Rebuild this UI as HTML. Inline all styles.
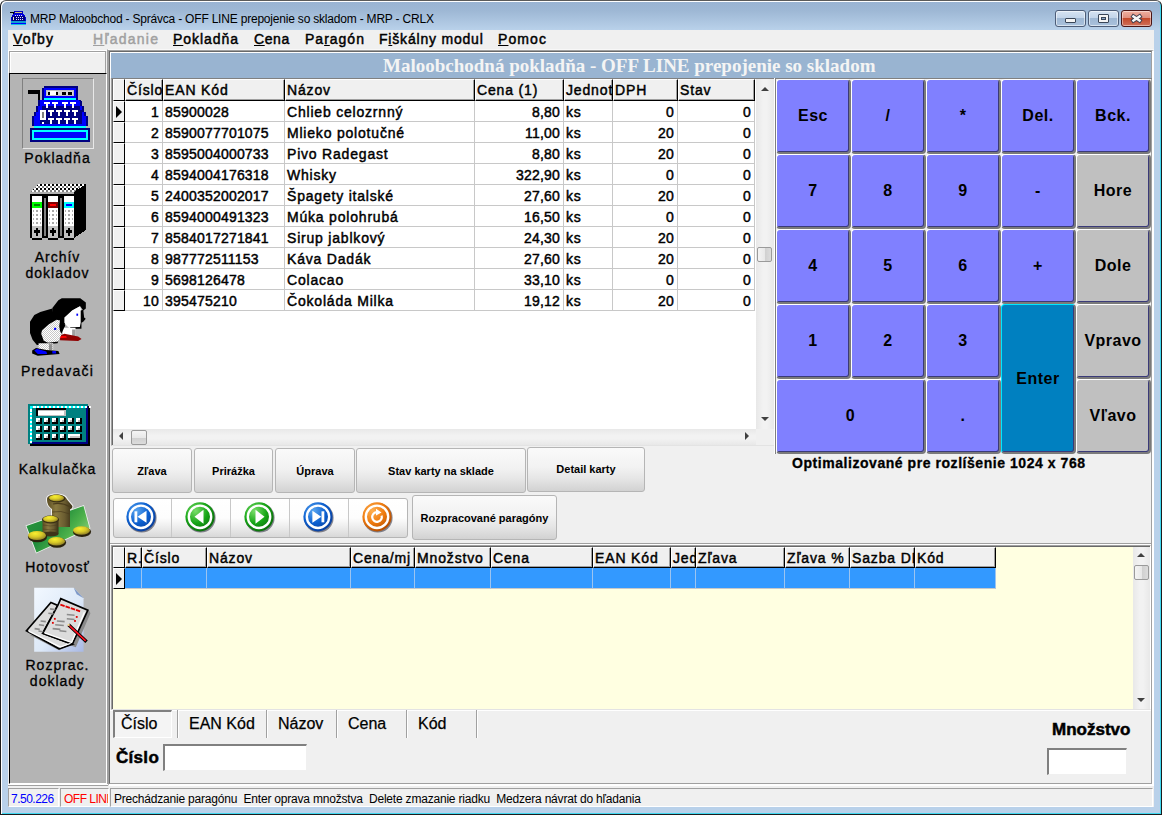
<!DOCTYPE html>
<html><head><meta charset="utf-8">
<style>
*{box-sizing:border-box;margin:0;padding:0}
html,body{width:1162px;height:815px;overflow:hidden;background:#fff}
body{position:relative;font-family:"Liberation Sans",sans-serif;color:#000}
.a{position:absolute}
.t{position:absolute;white-space:nowrap;line-height:1}
/* frame */
#frame{left:0;top:0;width:1162px;height:815px;background:linear-gradient(#99b3d2,#9eb8d5 10px,#b9d1ea 29px,#b9d1ea);border:1px solid #1c1c1c;border-top-color:#5a5a5a;border-radius:6px 6px 0 0;box-shadow:inset 1px 1px 0 #fff, inset -1px -1px 0 #40d8f0}
#client{left:8px;top:30px;width:1146px;height:777px;background:#f0f0f0}
.menu{font-weight:normal;-webkit-text-stroke:.45px currentColor;font-size:14px;top:32px}
.menu u{text-decoration:underline;text-underline-offset:1px;text-decoration-thickness:1px}
/* grid */
.g1h{position:absolute;top:79px;height:22px;background:#f0f0f0;border-left:1px solid #fff;border-top:1px solid #fff;border-right:1px solid #000;border-bottom:1px solid #000;box-shadow:inset -1px -1px 0 #a0a0a0;font-weight:normal;-webkit-text-stroke:.45px currentColor;letter-spacing:.85px;font-size:14px;padding:2px 0 0 1px;overflow:hidden;white-space:nowrap}
.g1c.tx{letter-spacing:.8px}
.g1c{position:absolute;height:21px;border-right:1px solid #c8c8c8;border-bottom:1px solid #c8c8c8;font-weight:normal;-webkit-text-stroke:.45px currentColor;letter-spacing:.2px;font-size:14px;padding:3px 2px 0 2px;overflow:hidden;white-space:nowrap}
.r{text-align:right;padding-right:3px}
.ind{position:absolute;left:113px;width:12px;height:21px;background:#f0f0f0;border-right:1px solid #000;border-bottom:1px solid #000;border-top:1px solid #fff;border-left:1px solid #fff}
.key{position:absolute;width:75px;height:75px;border-top:1px solid #fff;border-left:1px solid #fff;border-right:2px solid #7a7a7a;border-bottom:2px solid #7a7a7a;box-shadow:inset -1px -1px 0 #3a3a78;background:#8080ff;border-radius:4px;font-weight:bold;font-size:16px;letter-spacing:.5px;display:flex;align-items:center;justify-content:center}
.gray{background:#c0c0c0}
.enter{background:#0080c0;border-top-color:#00e8ff;border-left-color:#00e8ff}
.btn{position:absolute;border:1px solid #b5b5b5;border-radius:3px;background:linear-gradient(#fafafa 0%,#f2f2f2 45%,#e6e6e6 70%,#d2d2d2 100%);font-weight:bold;font-size:11px;display:flex;align-items:center;justify-content:center;color:#000}
.g2h{position:absolute;top:547px;height:21px;background:#f0f0f0;border-left:1px solid #fff;border-top:1px solid #fff;border-right:1px solid #000;border-bottom:1px solid #000;box-shadow:inset -1px -1px 0 #a0a0a0;font-weight:normal;-webkit-text-stroke:.45px currentColor;letter-spacing:.85px;font-size:14px;padding:2px 0 0 1px;overflow:hidden;white-space:nowrap}
.g2c{position:absolute;top:568px;height:21px;background:#3399ff;border-right:1px solid #9cc4f0;border-bottom:1px solid #c8c8c8}
.tab{position:absolute;top:710px;height:28px;font-size:16px;padding-top:6px;-webkit-text-stroke:.25px #000}
.tsep{position:absolute;top:710px;width:2px;height:28px;border-left:1px solid #a0a0a0;border-right:1px solid #fff}
.stat{position:absolute;top:788px;height:19px;border-top:1px solid #a0a0a0;border-left:1px solid #a0a0a0;border-right:1px solid #fff;border-bottom:1px solid #fff;font-size:12px;padding:3px 0 0 3px;white-space:nowrap;overflow:hidden}
.side{font-weight:normal;-webkit-text-stroke:.3px currentColor;font-size:14px;letter-spacing:1px;text-align:center;width:97px;left:9px}
</style></head><body>
<div id="frame" class="a"></div>
<div id="client" class="a"></div>

<!-- title -->
<div class="t" style="left:30px;top:13px;font-size:12px;color:#000;letter-spacing:-0.2px">MRP Maloobchod - Správca - OFF LINE prepojenie so skladom - MRP - CRLX</div>

<!-- caption buttons -->
<div class="a" style="left:1055px;top:10px;width:31px;height:17px;border:1px solid #4d5d78;border-radius:3px;background:linear-gradient(#d6e3f2 0%,#c3d5ea 45%,#9fb8d4 50%,#a9c1dc 100%);box-shadow:inset 0 0 0 1px rgba(255,255,255,.55)"></div>
<div class="a" style="left:1070px;top:23px;width:0;height:0"></div>
<div class="a" style="left:1065px;top:18px;width:11px;height:5px;background:#f4f4f4;border:1px solid #3a4658;border-radius:1px"></div>
<div class="a" style="left:1088px;top:10px;width:31px;height:17px;border:1px solid #4d5d78;border-radius:3px;background:linear-gradient(#d6e3f2 0%,#c3d5ea 45%,#9fb8d4 50%,#a9c1dc 100%);box-shadow:inset 0 0 0 1px rgba(255,255,255,.55)"></div>
<div class="a" style="left:1098px;top:14px;width:11px;height:9px;background:#f4f4f4;border:1px solid #3a4658;border-radius:1px"></div>
<div class="a" style="left:1101px;top:17px;width:5px;height:3px;background:#8aa4c4;border:1px solid #3a4658"></div>
<div class="a" style="left:1121px;top:10px;width:31px;height:17px;border:1px solid #4a1414;border-radius:3px;background:linear-gradient(#f0b0a0 0%,#e09080 45%,#c44a2c 50%,#d0705a 100%);box-shadow:inset 0 0 0 1px rgba(255,255,255,.45)"></div>
<svg class="a" style="left:1129px;top:12px" width="16" height="13"><path d="M4.5 4.5 L10.5 8.5 M10.5 4.5 L4.5 8.5" stroke="#3a3a4a" stroke-width="4.4" stroke-linecap="square"/><path d="M4.5 4.5 L10.5 8.5 M10.5 4.5 L4.5 8.5" stroke="#f6f6f6" stroke-width="2.6" stroke-linecap="square"/></svg>

<!-- menu -->
<div class="t menu" style="left:13px;letter-spacing:1.2px"><u>V</u>oľby</div>
<div class="t menu" style="left:93px;color:#a0a0a0;letter-spacing:1.25px"><u>H</u>ľadanie</div>
<div class="t menu" style="left:173px;letter-spacing:.95px"><u>P</u>okladňa</div>
<div class="t menu" style="left:254px;letter-spacing:.6px"><u>C</u>ena</div>
<div class="t menu" style="left:305px;letter-spacing:1px">Pa<u>r</u>agón</div>
<div class="t menu" style="left:379px;letter-spacing:.8px">F<u>i</u>škálny modul</div>
<div class="t menu" style="left:498px;letter-spacing:1.1px"><u>P</u>omoc</div>

<!-- sidebar -->
<div class="a" style="left:8px;top:50px;width:99px;height:23px;border-top:1px solid #fff;border-left:1px solid #fff"></div>
<div class="a" style="left:9px;top:51px;width:97px;height:22px;background:#f0f0f0;border-top:1px solid #a0a0a0;border-left:1px solid #a0a0a0;border-right:1px solid #a0a0a0;box-shadow:inset 1px 1px 0 #fff"></div>
<div class="a" style="left:8px;top:784px;width:100px;height:2px;border-top:1px solid #fff;border-bottom:1px solid #a0a0a0"></div>
<div class="a" style="left:9px;top:73px;width:98px;height:711px;background:#b4b4b4;border-top:1px solid #000;border-left:1px solid #000;border-right:1px solid #fff;border-bottom:1px solid #fff"></div>
<div class="a" style="left:22px;top:78px;width:72px;height:71px;border-top:1px solid #808080;border-left:1px solid #808080;border-right:1px solid #e8e8e8;border-bottom:1px solid #e8e8e8"></div>
<!--ICONS-->
<svg class="a" style="left:24px;top:82px" width="70" height="64" shape-rendering="crispEdges"><rect x="4" y="8" width="10" height="4" fill="#000"/><rect x="14" y="8" width="2" height="12" fill="#000"/><rect x="19.5" y="4" width="34.5" height="2" fill="#000080"/><rect x="18" y="6" width="2" height="12" fill="#000080"/><rect x="52" y="6" width="2" height="12" fill="#000080"/><rect x="20" y="6" width="32" height="10" fill="#0000ff"/><rect x="22" y="8" width="28" height="6" fill="#c0c0c0"/><rect x="23" y="9" width="26" height="4" fill="#d8d8d8"/><rect x="24" y="10" width="2" height="3" fill="#000"/><rect x="26" y="9" width="6" height="4" fill="#fff"/><rect x="32" y="10" width="2" height="3" fill="#000"/><rect x="38" y="10" width="4" height="3" fill="#000"/><rect x="44" y="10" width="4" height="3" fill="#000"/><rect x="20" y="16" width="32" height="2" fill="#00ffff"/><polygon points="14,18 56,18 58,20 58,24 60,24 60,30 62,30 62,34 64,34 64,44 8,44 8,34 10,34 10,30 12,30 12,24 14,24" fill="#000080"/><polygon points="16,18 54,18 56,20 56,24 58,24 58,30 60,30 60,34 62,34 62,44 10,44 10,34 12,34 12,30 14,30 14,24 16,24" fill="#0000ff"/><rect x="18" y="24" width="38" height="18" fill="#000080"/><rect x="16" y="28" width="42" height="14" fill="#000080"/><rect x="20" y="20" width="6" height="2" fill="#fff"/><rect x="22" y="22" width="2" height="4" fill="#fff"/><rect x="28" y="20" width="6" height="2" fill="#fff"/><rect x="30" y="22" width="2" height="4" fill="#fff"/><rect x="38" y="20" width="6" height="2" fill="#fff"/><rect x="40" y="22" width="2" height="4" fill="#fff"/><rect x="46" y="20" width="6" height="2" fill="#fff"/><rect x="48" y="22" width="2" height="4" fill="#fff"/><rect x="24" y="28" width="6" height="2" fill="#fff"/><rect x="26" y="30" width="2" height="4" fill="#fff"/><rect x="24" y="36" width="6" height="2" fill="#fff"/><rect x="26" y="38" width="2" height="4" fill="#fff"/><rect x="32" y="28" width="6" height="2" fill="#fff"/><rect x="34" y="30" width="2" height="4" fill="#fff"/><rect x="32" y="36" width="6" height="2" fill="#fff"/><rect x="34" y="38" width="2" height="4" fill="#fff"/><rect x="40" y="28" width="6" height="2" fill="#fff"/><rect x="42" y="30" width="2" height="4" fill="#fff"/><rect x="40" y="36" width="6" height="2" fill="#fff"/><rect x="42" y="38" width="2" height="4" fill="#fff"/><rect x="48" y="28" width="6" height="2" fill="#fff"/><rect x="50" y="30" width="2" height="4" fill="#fff"/><rect x="48" y="36" width="6" height="2" fill="#fff"/><rect x="50" y="38" width="2" height="4" fill="#fff"/><rect x="16" y="28" width="6" height="10" fill="#fff"/><rect x="18" y="30" width="2" height="6" fill="#808080"/><rect x="18" y="39.5" width="2" height="2" fill="#fff"/><rect x="10" y="44" width="52" height="2" fill="#00ffff"/><rect x="6" y="46" width="60" height="14" fill="#000080"/><rect x="8" y="47.5" width="56" height="10" fill="#00ffff"/><rect x="10" y="49.5" width="52" height="6" fill="#0000ff"/></svg>
<svg class="a" style="left:24px;top:176px" width="70" height="68" shape-rendering="crispEdges"><polygon points="50,16 62,8 62,54 50,62" fill="#000"/><defs><pattern id="chk" width="4" height="4" patternUnits="userSpaceOnUse"><rect width="4" height="4" fill="#fff"/><rect width="2" height="2" fill="#000"/><rect x="2" y="2" width="2" height="2" fill="#808080"/></pattern></defs><polygon points="6,16 14,8 62,8 50,16" fill="url(#chk)"/><rect x="6" y="16" width="44" height="2" fill="#b0b0b0"/><rect x="6" y="18" width="44" height="44" fill="#000"/><rect x="8" y="20" width="10" height="6" fill="#fff"/><rect x="8" y="50" width="10" height="12" fill="#c0c0c0"/><rect x="8" y="32" width="10" height="18" fill="#fff"/><rect x="9" y="34" width="1" height="2" fill="#b0b0b0"/><rect x="12" y="34" width="2" height="2" fill="#a8a8a8"/><rect x="16" y="34" width="1" height="2" fill="#b0b0b0"/><rect x="9" y="38" width="1" height="2" fill="#b0b0b0"/><rect x="12" y="38" width="2" height="2" fill="#a8a8a8"/><rect x="16" y="38" width="1" height="2" fill="#b0b0b0"/><rect x="9" y="42" width="1" height="2" fill="#b0b0b0"/><rect x="12" y="42" width="2" height="2" fill="#a8a8a8"/><rect x="16" y="42" width="1" height="2" fill="#b0b0b0"/><rect x="9" y="46" width="1" height="2" fill="#b0b0b0"/><rect x="12" y="46" width="2" height="2" fill="#a8a8a8"/><rect x="16" y="46" width="1" height="2" fill="#b0b0b0"/><rect x="12" y="52" width="2" height="8" fill="#000"/><rect x="10" y="54" width="6" height="3" fill="#000"/><rect x="24" y="20" width="10" height="6" fill="#fff"/><rect x="24" y="50" width="10" height="12" fill="#c0c0c0"/><rect x="24" y="32" width="10" height="18" fill="#fff"/><rect x="25" y="34" width="1" height="2" fill="#b0b0b0"/><rect x="28" y="34" width="2" height="2" fill="#a8a8a8"/><rect x="32" y="34" width="1" height="2" fill="#b0b0b0"/><rect x="25" y="38" width="1" height="2" fill="#b0b0b0"/><rect x="28" y="38" width="2" height="2" fill="#a8a8a8"/><rect x="32" y="38" width="1" height="2" fill="#b0b0b0"/><rect x="25" y="42" width="1" height="2" fill="#b0b0b0"/><rect x="28" y="42" width="2" height="2" fill="#a8a8a8"/><rect x="32" y="42" width="1" height="2" fill="#b0b0b0"/><rect x="25" y="46" width="1" height="2" fill="#b0b0b0"/><rect x="28" y="46" width="2" height="2" fill="#a8a8a8"/><rect x="32" y="46" width="1" height="2" fill="#b0b0b0"/><rect x="28" y="52" width="2" height="8" fill="#000"/><rect x="26" y="54" width="6" height="3" fill="#000"/><rect x="40" y="20" width="10" height="6" fill="#fff"/><rect x="40" y="50" width="10" height="12" fill="#c0c0c0"/><rect x="40" y="32" width="10" height="18" fill="#fff"/><rect x="41" y="34" width="1" height="2" fill="#b0b0b0"/><rect x="44" y="34" width="2" height="2" fill="#a8a8a8"/><rect x="48" y="34" width="1" height="2" fill="#b0b0b0"/><rect x="41" y="38" width="1" height="2" fill="#b0b0b0"/><rect x="44" y="38" width="2" height="2" fill="#a8a8a8"/><rect x="48" y="38" width="1" height="2" fill="#b0b0b0"/><rect x="41" y="42" width="1" height="2" fill="#b0b0b0"/><rect x="44" y="42" width="2" height="2" fill="#a8a8a8"/><rect x="48" y="42" width="1" height="2" fill="#b0b0b0"/><rect x="41" y="46" width="1" height="2" fill="#b0b0b0"/><rect x="44" y="46" width="2" height="2" fill="#a8a8a8"/><rect x="48" y="46" width="1" height="2" fill="#b0b0b0"/><rect x="44" y="52" width="2" height="8" fill="#000"/><rect x="42" y="54" width="6" height="3" fill="#000"/><rect x="8" y="26" width="10" height="6" fill="#00ff00"/><rect x="10" y="28" width="6" height="2" fill="#008000"/><rect x="24" y="26" width="10" height="6" fill="#800000"/><rect x="26" y="28" width="6" height="2" fill="#ff0000"/><rect x="40" y="26" width="10" height="6" fill="#00ffff"/><rect x="42" y="28" width="6" height="2" fill="#0000ff"/><rect x="20" y="22" width="2" height="38" fill="#808080"/><rect x="36" y="22" width="2" height="38" fill="#808080"/><rect x="8" y="62" width="10" height="2" fill="#000"/><rect x="24" y="62" width="10" height="2" fill="#000"/><rect x="40" y="62" width="10" height="2" fill="#000"/></svg>
<svg class="a" style="left:24px;top:290px" width="70" height="70"><defs><pattern id="dth" width="2" height="2" patternUnits="userSpaceOnUse"><rect width="2" height="2" fill="#fff"/><rect width="1" height="1" fill="#c8c8c8"/><rect x="1" y="1" width="1" height="1" fill="#c8c8c8"/></pattern></defs><polygon points="37.79,8.16 56.26,8.16 61.84,12.45 61.84,18.47 59.26,20.61 56.26,16.32 48.1,20.61 42.09,27.48 40.37,36.93 28.34,36.93 28.34,18.04 34.36,10.31" fill="#000" /><polygon points="40.37,27.48 48.1,20.61 55.83,16.32 57.97,21.47 59.26,27.48 61.84,28.77 59.26,31.35 57.55,32.64 57.55,38.65 46.38,39.08 42.94,36.07 40.37,32.64" fill="#fff" /><polygon points="56.69,20.61 59.26,19.75 60.12,27.48 61.84,28.77 59.26,31.78 57.55,32.64 57.55,38.65 45.52,39.08 46.38,37.36 55.83,36.93 56.69,32.64" fill="#000" /><polygon points="38.65,37.79 51.53,37.79 51.53,46.38 38.65,46.38" fill="#fff" /><polygon points="48.1,39.51 51.53,39.51 51.53,46.38 48.1,46.38" fill="#a0a0a0" /><polygon points="36.07,45.52 40.37,43.8 54.11,46.38 57.55,48.96 54.11,51.1 36.07,50.24" fill="#900000" /><polygon points="36.07,45.95 42.09,45.95 42.94,47.67 36.07,48.1" fill="#ff0000" /><polygon points="52.39,23.62 54.11,23.62 54.11,25.77 52.39,25.77" fill="#0000ff" /><polygon points="6.01,31.78 10.31,24.91 16.32,21.9 28.34,18.47 30.06,28.34 41.23,35.21 37.79,42.94 33.5,53.25 12.88,54.97 8.59,49.82 6.01,42.94" fill="#000" /><polygon points="18.04,40.37 24.91,34.36 32.64,29.63 36.07,30.49 35.21,36.07 36.07,41.23 37.79,43.8 34.36,51.53 24.05,52.82 19.75,50.67 17.18,43.8" fill="url(#dth)" /><polygon points="30.06,37.79 32.21,37.79 32.21,39.94 30.06,39.94" fill="#0000ff" /><polygon points="14.6,53.25 29.2,53.25 29.2,60.12 14.6,60.12" fill="url(#dth)" /><polygon points="24.91,54.11 28.34,54.11 28.34,60.12 24.91,60.12" fill="#909090" /><polygon points="8.16,60.55 12.02,57.97 22.33,60.12 34.36,60.98 35.64,63.99 13.74,65.7 8.16,63.56" fill="#000" /><polygon points="10.31,60.55 12.88,58.83 22.33,61.41 23.19,63.99 13.74,63.99" fill="#0000ff" /><polygon points="28.34,60.98 31.78,60.98 32.21,63.56 28.34,63.56" fill="#0000ff" /></svg>
<svg class="a" style="left:20px;top:396px" width="80" height="50" shape-rendering="crispEdges"><rect x="9.98" y="9.98" width="59.9" height="40.0" fill="#000"/><rect x="7.92" y="7.92" width="60.24" height="39.93" fill="#008080"/><rect x="66.09" y="9.98" width="2.07" height="37.87" fill="#000080"/><rect x="12.05" y="45.78" width="56.11" height="2.07" fill="#000080"/><rect x="9.98" y="9.98" width="56.11" height="2.07" fill="#00ffff"/><rect x="9.98" y="9.98" width="2.07" height="35.8" fill="#00ffff"/><rect x="13.43" y="9.98" width="2.07" height="2.07" fill="#fff"/><rect x="17.42" y="9.98" width="2.07" height="2.07" fill="#fff"/><rect x="21.41" y="9.98" width="2.07" height="2.07" fill="#fff"/><rect x="25.4" y="9.98" width="2.07" height="2.07" fill="#fff"/><rect x="29.4" y="9.98" width="2.07" height="2.07" fill="#fff"/><rect x="33.39" y="9.98" width="2.07" height="2.07" fill="#fff"/><rect x="37.38" y="9.98" width="2.07" height="2.07" fill="#fff"/><rect x="41.38" y="9.98" width="2.07" height="2.07" fill="#fff"/><rect x="45.37" y="9.98" width="2.07" height="2.07" fill="#fff"/><rect x="49.36" y="9.98" width="2.07" height="2.07" fill="#fff"/><rect x="53.36" y="9.98" width="2.07" height="2.07" fill="#fff"/><rect x="57.35" y="9.98" width="2.07" height="2.07" fill="#fff"/><rect x="61.34" y="9.98" width="2.07" height="2.07" fill="#fff"/><rect x="65.34" y="9.98" width="2.07" height="2.07" fill="#fff"/><rect x="69.33" y="9.98" width="2.07" height="2.07" fill="#fff"/><rect x="9.98" y="13.43" width="2.07" height="2.07" fill="#fff"/><rect x="9.98" y="17.42" width="2.07" height="2.07" fill="#fff"/><rect x="9.98" y="21.41" width="2.07" height="2.07" fill="#fff"/><rect x="9.98" y="25.4" width="2.07" height="2.07" fill="#fff"/><rect x="9.98" y="29.4" width="2.07" height="2.07" fill="#fff"/><rect x="9.98" y="33.39" width="2.07" height="2.07" fill="#fff"/><rect x="9.98" y="37.38" width="2.07" height="2.07" fill="#fff"/><rect x="9.98" y="41.38" width="2.07" height="2.07" fill="#fff"/><rect x="9.98" y="45.37" width="2.07" height="2.07" fill="#fff"/><rect x="15.83" y="12.05" width="29.95" height="7.92" fill="#000"/><rect x="17.9" y="14.11" width="27.88" height="5.85" fill="#c0c0c0"/><rect x="18.24" y="14.8" width="26.16" height="3.79" fill="#fff"/><rect x="15.83" y="22.03" width="5.85" height="5.85" fill="#000"/><rect x="15.83" y="22.03" width="4.13" height="4.13" fill="#fff"/><rect x="17.9" y="24.1" width="2.07" height="2.07" fill="#c0c0c0"/><rect x="23.96" y="22.03" width="5.85" height="5.85" fill="#000"/><rect x="23.96" y="22.03" width="4.13" height="4.13" fill="#fff"/><rect x="26.02" y="24.1" width="2.07" height="2.07" fill="#c0c0c0"/><rect x="31.88" y="22.03" width="5.85" height="5.85" fill="#000"/><rect x="31.88" y="22.03" width="4.13" height="4.13" fill="#fff"/><rect x="33.94" y="24.1" width="2.07" height="2.07" fill="#c0c0c0"/><rect x="39.93" y="22.03" width="5.85" height="5.85" fill="#000"/><rect x="39.93" y="22.03" width="4.13" height="4.13" fill="#fff"/><rect x="42.0" y="24.1" width="2.07" height="2.07" fill="#c0c0c0"/><rect x="47.85" y="22.03" width="5.85" height="5.85" fill="#000"/><rect x="47.85" y="22.03" width="4.13" height="4.13" fill="#fff"/><rect x="49.91" y="24.1" width="2.07" height="2.07" fill="#c0c0c0"/><rect x="55.9" y="22.03" width="5.85" height="5.85" fill="#000"/><rect x="55.9" y="22.03" width="4.13" height="4.13" fill="#fff"/><rect x="57.97" y="24.1" width="2.07" height="2.07" fill="#c0c0c0"/><rect x="15.83" y="29.95" width="5.85" height="5.85" fill="#000"/><rect x="15.83" y="29.95" width="4.13" height="4.13" fill="#fff"/><rect x="17.9" y="32.01" width="2.07" height="2.07" fill="#c0c0c0"/><rect x="23.96" y="29.95" width="5.85" height="5.85" fill="#000"/><rect x="23.96" y="29.95" width="4.13" height="4.13" fill="#fff"/><rect x="26.02" y="32.01" width="2.07" height="2.07" fill="#c0c0c0"/><rect x="31.88" y="29.95" width="5.85" height="5.85" fill="#000"/><rect x="31.88" y="29.95" width="4.13" height="4.13" fill="#fff"/><rect x="33.94" y="32.01" width="2.07" height="2.07" fill="#c0c0c0"/><rect x="39.93" y="29.95" width="5.85" height="5.85" fill="#000"/><rect x="39.93" y="29.95" width="4.13" height="4.13" fill="#fff"/><rect x="42.0" y="32.01" width="2.07" height="2.07" fill="#c0c0c0"/><rect x="47.85" y="29.95" width="5.85" height="5.85" fill="#000"/><rect x="47.85" y="29.95" width="4.13" height="4.13" fill="#fff"/><rect x="49.91" y="32.01" width="2.07" height="2.07" fill="#c0c0c0"/><rect x="55.9" y="29.95" width="5.85" height="5.85" fill="#000"/><rect x="55.9" y="29.95" width="4.13" height="4.13" fill="#fff"/><rect x="57.97" y="32.01" width="2.07" height="2.07" fill="#c0c0c0"/><rect x="15.83" y="37.87" width="5.85" height="5.85" fill="#000"/><rect x="15.83" y="37.87" width="4.13" height="4.13" fill="#fff"/><rect x="17.9" y="39.93" width="2.07" height="2.07" fill="#c0c0c0"/><rect x="23.96" y="37.87" width="5.85" height="5.85" fill="#000"/><rect x="23.96" y="37.87" width="4.13" height="4.13" fill="#fff"/><rect x="26.02" y="39.93" width="2.07" height="2.07" fill="#c0c0c0"/><rect x="31.88" y="37.87" width="5.85" height="5.85" fill="#000"/><rect x="31.88" y="37.87" width="4.13" height="4.13" fill="#fff"/><rect x="33.94" y="39.93" width="2.07" height="2.07" fill="#c0c0c0"/><rect x="39.93" y="37.87" width="5.85" height="5.85" fill="#000"/><rect x="39.93" y="37.87" width="4.13" height="4.13" fill="#fff"/><rect x="42.0" y="39.93" width="2.07" height="2.07" fill="#c0c0c0"/><rect x="47.85" y="37.87" width="14.11" height="5.85" fill="#000"/><rect x="47.85" y="37.87" width="12.39" height="4.13" fill="#fff"/><rect x="49.91" y="39.93" width="10.33" height="2.07" fill="#c8c8c8"/></svg>
<svg class="a" style="left:20px;top:490px" width="80" height="66"><defs><linearGradient id="gn" x1="0" y1="0" x2="1" y2="0.6"><stop offset="0" stop-color="#2f9a3c"/><stop offset=".45" stop-color="#1e8a3a"/><stop offset=".75" stop-color="#4cb04a"/><stop offset="1" stop-color="#8ed07a"/></linearGradient><linearGradient id="cs" x1="0" y1="0" x2="1" y2="0"><stop offset="0" stop-color="#5a4c22"/><stop offset=".35" stop-color="#8a7a40"/><stop offset=".7" stop-color="#6a5c30"/><stop offset="1" stop-color="#3a3016"/></linearGradient><radialGradient id="gy" cx=".4" cy=".3" r=".75"><stop offset="0" stop-color="#f8f030"/><stop offset=".5" stop-color="#d8c828"/><stop offset="1" stop-color="#8a7a28"/></radialGradient></defs><path d="M26,9 C26,4 33,3 38,3.5 C44,4 47,6 48,9 L53,15 C54,17 53,19 51,20 L51,38 L31,38 L31,19 C28,17 26,14 26,9 Z" fill="#f0f0f0"/><polygon points="5.5,35.5 64,15 70.5,38.5 16,63.5" fill="#f0f4f0"/><polygon points="6.5,36 63.5,16 69.5,38 16.5,62.5" fill="url(#gn)"/><path d="M27,9 C27,5 33,4 38,4.5 C43,5 46,7 47,9.5 L52,15.5 C53,17 52,18.5 50,19.5 L50,37 L32,37 L32,19 C29,17 27,14 27,9 Z" fill="url(#cs)"/><ellipse cx="37" cy="8.5" rx="8.5" ry="4" fill="#3a3014"/><ellipse cx="36.5" cy="8" rx="7.5" ry="3.2" fill="url(#gy)"/><path d="M33,14 Q42,12 50,17" stroke="#4a3c1c" stroke-width="1.2" fill="none"/><path d="M32,22 Q41,20 50,24" stroke="#4a3c1c" stroke-width="1" fill="none" opacity=".7"/><rect x="22.5" y="29" width="16" height="15" fill="url(#cs)"/><ellipse cx="30.5" cy="44" rx="8" ry="2.5" fill="#3e3218"/><ellipse cx="30.5" cy="29.5" rx="8.5" ry="4" fill="#3a3014"/><ellipse cx="30.5" cy="29" rx="7.5" ry="3.3" fill="url(#gy)"/><path d="M23,35 Q30.5,37 38,35 M23,39 Q30.5,41 38,39" stroke="#4a3c1c" stroke-width=".8" fill="none" opacity=".6"/><ellipse cx="17.5" cy="46.8" rx="9.6" ry="5.5" fill="#2a220c"/><ellipse cx="17" cy="45.5" rx="9" ry="4.6" fill="url(#gy)"/><ellipse cx="37.0" cy="52.5" rx="9.1" ry="5.2" fill="#2a220c"/><ellipse cx="36.5" cy="51.2" rx="8.5" ry="4.3" fill="url(#gy)"/><ellipse cx="62.0" cy="41.8" rx="9.1" ry="5.1000000000000005" fill="#2a220c"/><ellipse cx="61.5" cy="40.5" rx="8.5" ry="4.2" fill="url(#gy)"/></svg>
<svg class="a" style="left:20px;top:584px" width="80" height="70"><defs><linearGradient id="dg" x1="0" y1="0" x2="1" y2="1"><stop offset="0" stop-color="#f2f8ff"/><stop offset=".55" stop-color="#dde9f8"/><stop offset="1" stop-color="#a8b8e4"/></linearGradient></defs><polygon points="14.17,3.86 53.68,3.86 63.56,14.17 63.56,67.85 14.17,67.85" fill="url(#dg)" /><polygon points="53.68,3.86 63.56,14.17 56.69,10.31" fill="#7d98c8" /><polygon points="9.45,50.67 25.77,52.39 55.83,63.13 70.43,29.2 68.71,25.77 53.25,60.12 39.08,66.13" fill="#8a8a8a" /><polygon points="6.44,46.81 30.92,18.47 37.79,21.47 22.76,49.39 52.39,60.12 39.08,64.85" fill="#dcdcdc" stroke="#000" stroke-width="1.7" stroke-linejoin="miter"/><polygon points="37.79,21.47 40.8,14.6 67.85,26.2 52.39,60.12 22.76,49.39" fill="#dcdcdc" stroke="#000" stroke-width="1.7" stroke-linejoin="miter"/><polyline points="8.59,47.07 40.37,63.13 50.67,59.26" fill="none" stroke="#fff" stroke-width="1.3" /><polyline points="24.48,48.96 51.53,58.4 64.42,28.34" fill="none" stroke="#fff" stroke-width="1.3" /><line x1="40.37" y1="20.61" x2="60.12" y2="27.31" stroke="#e00000" stroke-width="1.8" stroke-dasharray="4.5 1"/><line x1="30.06" y1="24.91" x2="35.21" y2="25.59" stroke="#8c8c8c" stroke-width="1.6"/><line x1="28.34" y1="29.2" x2="33.5" y2="29.89" stroke="#8c8c8c" stroke-width="1.6"/><line x1="20.61" y1="36.93" x2="25.77" y2="37.62" stroke="#8c8c8c" stroke-width="1.6"/><line x1="18.9" y1="40.8" x2="24.05" y2="41.48" stroke="#8c8c8c" stroke-width="1.6"/><line x1="14.6" y1="44.66" x2="19.75" y2="45.35" stroke="#8c8c8c" stroke-width="1.6"/><line x1="18.47" y1="47.07" x2="23.19" y2="47.75" stroke="#8c8c8c" stroke-width="1.6"/><line x1="46.81" y1="30.49" x2="54.54" y2="31.18" stroke="#8c8c8c" stroke-width="1.6"/><line x1="46.81" y1="34.78" x2="54.54" y2="35.47" stroke="#8c8c8c" stroke-width="1.6"/><line x1="36.93" y1="36.93" x2="44.66" y2="37.62" stroke="#8c8c8c" stroke-width="1.6"/><line x1="35.21" y1="40.8" x2="43.8" y2="41.48" stroke="#8c8c8c" stroke-width="1.6"/><line x1="32.64" y1="44.66" x2="40.37" y2="45.35" stroke="#8c8c8c" stroke-width="1.6"/><line x1="39.51" y1="46.81" x2="46.38" y2="47.5" stroke="#8c8c8c" stroke-width="1.6"/><rect x="33.93" y="33.93" width="1.8" height="1.8" fill="#e00000"/><rect x="31.95" y="37.96" width="1.8" height="1.8" fill="#e00000"/><rect x="55.83" y="32.04" width="1.8" height="1.8" fill="#e00000"/><rect x="54.11" y="36.07" width="1.8" height="1.8" fill="#e00000"/><line x1="48.53" y1="40.8" x2="66.56" y2="57.72" stroke="#000" stroke-width="3.4"/><line x1="49.64" y1="41.91" x2="65.7" y2="56.86" stroke="#ff1020" stroke-width="1.7"/><rect x="47.67" y="39.94" width="2" height="2" fill="#f8d890"/></svg>
<svg class="a" style="left:6px;top:6px" width="24" height="24" shape-rendering="crispEdges"><rect x="4" y="6" width="4" height="1" fill="#000"/><rect x="7" y="6" width="1" height="3" fill="#000"/><rect x="8" y="5" width="9" height="3" fill="#0000c0"/><rect x="9" y="6" width="7" height="1" fill="#d0c080"/><polygon points="7,8 18,8 19,10 20,12 20,18 5,18 5,12 6,10" fill="#0000e0"/><rect x="6" y="10" width="13" height="5" fill="#000080"/><rect x="9" y="9" width="1" height="1" fill="#e0e0ff"/><rect x="11" y="9" width="1" height="1" fill="#e0e0ff"/><rect x="13" y="9" width="1" height="1" fill="#e0e0ff"/><rect x="15" y="9" width="1" height="1" fill="#e0e0ff"/><rect x="10" y="11" width="1" height="1" fill="#e0e0ff"/><rect x="12" y="11" width="1" height="1" fill="#e0e0ff"/><rect x="14" y="11" width="1" height="1" fill="#e0e0ff"/><rect x="16" y="11" width="1" height="1" fill="#e0e0ff"/><rect x="10" y="13" width="1" height="1" fill="#e0e0ff"/><rect x="12" y="13" width="1" height="1" fill="#e0e0ff"/><rect x="14" y="13" width="1" height="1" fill="#e0e0ff"/><rect x="16" y="13" width="1" height="1" fill="#e0e0ff"/><rect x="7" y="11" width="1" height="3" fill="#e0e0c0"/><rect x="5" y="15" width="15" height="1.5" fill="#10a0d0"/><rect x="5" y="16.5" width="15" height="1.5" fill="#0000ff"/><rect x="5" y="18" width="15" height="1" fill="#10c0e0"/></svg>
<!--/ICONS-->
<div class="t side" style="top:151px">Pokladňa</div>
<div class="t side" style="top:249px;line-height:16px">Archív<br>dokladov</div>
<div class="t side" style="top:364px;letter-spacing:1.2px">Predavači</div>
<div class="t side" style="top:462px">Kalkulačka</div>
<div class="t side" style="top:560px">Hotovosť</div>
<div class="t side" style="top:657px;line-height:16px">Rozprac.<br>doklady</div>

<!-- main panel -->
<div class="a" style="left:107px;top:49px;width:1047px;height:735px;border-top:1px solid #f8f8f8;border-left:1px solid #a0a0a0"></div>
<div class="a" style="left:108px;top:50px;width:1046px;height:736px;border-top:1px solid #a0a0a0;border-left:1px solid #a0a0a0;border-right:2px solid #fff;border-bottom:2px solid #fff"></div>
<div class="a" style="left:109px;top:51px;width:1043px;height:733px;border-top:1px solid #696969;border-left:1px solid #696969;border-right:1px solid #a0a0a0;border-bottom:1px solid #a0a0a0"></div>
<div class="a" style="left:110px;top:52px;width:1041px;height:26px;border-top:1px solid #fff;border-left:1px solid #fff;background:#99b4d1"></div>
<div class="t" style="left:383px;top:56px;font-family:'Liberation Serif',serif;font-weight:bold;font-size:19px;color:#f4f4f4">Maloobchodná pokladňa - OFF LINE prepojenie so skladom</div>

<!-- grid 1 -->
<div id="g1" class="a" style="left:111px;top:78px;width:663px;height:368px;background:#fff;border-top:1px solid #808080;border-left:1px solid #a0a0a0;box-shadow:inset 1px 0 0 #696969;border-bottom:1px solid #e3e3e3"></div>
<!--G1-->
<div class="a" style="left:113px;top:79px;width:12px;height:22px;background:#f0f0f0;border-right:1px solid #000;border-bottom:1px solid #000;border-top:1px solid #fff;border-left:1px solid #fff"></div>
<div class="g1h" style="left:125px;width:38px">Číslo</div>
<div class="g1h" style="left:163px;width:122px">EAN Kód</div>
<div class="g1h" style="left:285px;width:190px">Názov</div>
<div class="g1h" style="left:475px;width:89px">Cena (1)</div>
<div class="g1h" style="left:564px;width:49px">Jednotka</div>
<div class="g1h" style="left:613px;width:65px">DPH</div>
<div class="g1h" style="left:678px;width:77px">Stav</div>
<div class="ind" style="top:101px"></div>
<div class="g1c r" style="left:125px;top:101px;width:38px">1</div>
<div class="g1c" style="left:163px;top:101px;width:122px">85900028</div>
<div class="g1c tx" style="left:285px;top:101px;width:190px">Chlieb celozrnný</div>
<div class="g1c r" style="left:475px;top:101px;width:89px">8,80</div>
<div class="g1c tx" style="left:564px;top:101px;width:49px">ks</div>
<div class="g1c r" style="left:613px;top:101px;width:65px">0</div>
<div class="g1c r" style="left:678px;top:101px;width:77px">0</div>
<div class="ind" style="top:122px"></div>
<div class="g1c r" style="left:125px;top:122px;width:38px">2</div>
<div class="g1c" style="left:163px;top:122px;width:122px">8590077701075</div>
<div class="g1c tx" style="left:285px;top:122px;width:190px">Mlieko polotučné</div>
<div class="g1c r" style="left:475px;top:122px;width:89px">11,00</div>
<div class="g1c tx" style="left:564px;top:122px;width:49px">ks</div>
<div class="g1c r" style="left:613px;top:122px;width:65px">20</div>
<div class="g1c r" style="left:678px;top:122px;width:77px">0</div>
<div class="ind" style="top:143px"></div>
<div class="g1c r" style="left:125px;top:143px;width:38px">3</div>
<div class="g1c" style="left:163px;top:143px;width:122px">8595004000733</div>
<div class="g1c tx" style="left:285px;top:143px;width:190px">Pivo Radegast</div>
<div class="g1c r" style="left:475px;top:143px;width:89px">8,80</div>
<div class="g1c tx" style="left:564px;top:143px;width:49px">ks</div>
<div class="g1c r" style="left:613px;top:143px;width:65px">20</div>
<div class="g1c r" style="left:678px;top:143px;width:77px">0</div>
<div class="ind" style="top:164px"></div>
<div class="g1c r" style="left:125px;top:164px;width:38px">4</div>
<div class="g1c" style="left:163px;top:164px;width:122px">8594004176318</div>
<div class="g1c tx" style="left:285px;top:164px;width:190px">Whisky</div>
<div class="g1c r" style="left:475px;top:164px;width:89px">322,90</div>
<div class="g1c tx" style="left:564px;top:164px;width:49px">ks</div>
<div class="g1c r" style="left:613px;top:164px;width:65px">0</div>
<div class="g1c r" style="left:678px;top:164px;width:77px">0</div>
<div class="ind" style="top:185px"></div>
<div class="g1c r" style="left:125px;top:185px;width:38px">5</div>
<div class="g1c" style="left:163px;top:185px;width:122px">2400352002017</div>
<div class="g1c tx" style="left:285px;top:185px;width:190px">Špagety italské</div>
<div class="g1c r" style="left:475px;top:185px;width:89px">27,60</div>
<div class="g1c tx" style="left:564px;top:185px;width:49px">ks</div>
<div class="g1c r" style="left:613px;top:185px;width:65px">20</div>
<div class="g1c r" style="left:678px;top:185px;width:77px">0</div>
<div class="ind" style="top:206px"></div>
<div class="g1c r" style="left:125px;top:206px;width:38px">6</div>
<div class="g1c" style="left:163px;top:206px;width:122px">8594000491323</div>
<div class="g1c tx" style="left:285px;top:206px;width:190px">Múka polohrubá</div>
<div class="g1c r" style="left:475px;top:206px;width:89px">16,50</div>
<div class="g1c tx" style="left:564px;top:206px;width:49px">ks</div>
<div class="g1c r" style="left:613px;top:206px;width:65px">0</div>
<div class="g1c r" style="left:678px;top:206px;width:77px">0</div>
<div class="ind" style="top:227px"></div>
<div class="g1c r" style="left:125px;top:227px;width:38px">7</div>
<div class="g1c" style="left:163px;top:227px;width:122px">8584017271841</div>
<div class="g1c tx" style="left:285px;top:227px;width:190px">Sirup jablkový</div>
<div class="g1c r" style="left:475px;top:227px;width:89px">24,30</div>
<div class="g1c tx" style="left:564px;top:227px;width:49px">ks</div>
<div class="g1c r" style="left:613px;top:227px;width:65px">20</div>
<div class="g1c r" style="left:678px;top:227px;width:77px">0</div>
<div class="ind" style="top:248px"></div>
<div class="g1c r" style="left:125px;top:248px;width:38px">8</div>
<div class="g1c" style="left:163px;top:248px;width:122px">987772511153</div>
<div class="g1c tx" style="left:285px;top:248px;width:190px">Káva Dadák</div>
<div class="g1c r" style="left:475px;top:248px;width:89px">27,60</div>
<div class="g1c tx" style="left:564px;top:248px;width:49px">ks</div>
<div class="g1c r" style="left:613px;top:248px;width:65px">20</div>
<div class="g1c r" style="left:678px;top:248px;width:77px">0</div>
<div class="ind" style="top:269px"></div>
<div class="g1c r" style="left:125px;top:269px;width:38px">9</div>
<div class="g1c" style="left:163px;top:269px;width:122px">5698126478</div>
<div class="g1c tx" style="left:285px;top:269px;width:190px">Colacao</div>
<div class="g1c r" style="left:475px;top:269px;width:89px">33,10</div>
<div class="g1c tx" style="left:564px;top:269px;width:49px">ks</div>
<div class="g1c r" style="left:613px;top:269px;width:65px">0</div>
<div class="g1c r" style="left:678px;top:269px;width:77px">0</div>
<div class="ind" style="top:290px"></div>
<div class="g1c r" style="left:125px;top:290px;width:38px">10</div>
<div class="g1c" style="left:163px;top:290px;width:122px">395475210</div>
<div class="g1c tx" style="left:285px;top:290px;width:190px">Čokoláda Milka</div>
<div class="g1c r" style="left:475px;top:290px;width:89px">19,12</div>
<div class="g1c tx" style="left:564px;top:290px;width:49px">ks</div>
<div class="g1c r" style="left:613px;top:290px;width:65px">20</div>
<div class="g1c r" style="left:678px;top:290px;width:77px">0</div>
<div class="a" style="left:116px;top:106px;width:0;height:0;border-top:6px solid transparent;border-bottom:6px solid transparent;border-left:6px solid #000"></div>
<div class="a" style="left:756px;top:79px;width:18px;height:350px;background:linear-gradient(90deg,#e8e8e8,#f2f2f2 40%,#f2f2f2 60%,#e8e8e8)"></div>
<div class="a" style="left:761px;top:87px;width:0;height:0;border-left:4px solid transparent;border-right:4px solid transparent;border-bottom:4px solid #404040"></div>
<div class="a" style="left:761px;top:417px;width:0;height:0;border-left:4px solid transparent;border-right:4px solid transparent;border-top:4px solid #404040"></div>
<div class="a" style="left:757px;top:247px;width:15px;height:15px;border:1px solid #9a9a9a;border-radius:2px;background:linear-gradient(90deg,#f4f4f4,#e8e8e8 50%,#d0d0d0 55%,#dcdcdc)"></div>
<div class="a" style="left:756px;top:429px;width:18px;height:16px;background:#f0f0f0"></div>
<div class="a" style="left:113px;top:429px;width:643px;height:16px;background:linear-gradient(#e8e8e8,#f2f2f2 40%,#f2f2f2 60%,#e8e8e8)"></div>
<div class="a" style="left:119px;top:432px;width:0;height:0;border-top:4px solid transparent;border-bottom:4px solid transparent;border-right:4px solid #404040"></div>
<div class="a" style="left:745px;top:432px;width:0;height:0;border-top:4px solid transparent;border-bottom:4px solid transparent;border-left:4px solid #404040"></div>
<div class="a" style="left:131px;top:430px;width:16px;height:15px;border:1px solid #9a9a9a;border-radius:2px;background:linear-gradient(#f4f4f4,#e8e8e8 50%,#d0d0d0 55%,#dcdcdc)"></div>
<!--/G1-->

<!-- keypad -->
<!--KP-->
<div class="a" style="left:774px;top:78px;width:378px;height:376px;border-left:1px solid #fff"></div><div class="a" style="left:775px;top:78px;width:377px;height:1px;background:#808080"></div><div class="a" style="left:775px;top:78px;width:1px;height:376px;background:#808080"></div>
<div class="key " style="left:776px;top:79px;width:75px;height:75px">Esc</div>
<div class="key " style="left:851px;top:79px;width:75px;height:75px">/</div>
<div class="key " style="left:926px;top:79px;width:75px;height:75px">*</div>
<div class="key " style="left:1001px;top:79px;width:75px;height:75px">Del.</div>
<div class="key " style="left:1076px;top:79px;width:75px;height:75px">Bck.</div>
<div class="key " style="left:776px;top:154px;width:75px;height:75px">7</div>
<div class="key " style="left:851px;top:154px;width:75px;height:75px">8</div>
<div class="key " style="left:926px;top:154px;width:75px;height:75px">9</div>
<div class="key " style="left:1001px;top:154px;width:75px;height:75px">-</div>
<div class="key gray" style="left:1076px;top:154px;width:75px;height:75px">Hore</div>
<div class="key " style="left:776px;top:229px;width:75px;height:75px">4</div>
<div class="key " style="left:851px;top:229px;width:75px;height:75px">5</div>
<div class="key " style="left:926px;top:229px;width:75px;height:75px">6</div>
<div class="key " style="left:1001px;top:229px;width:75px;height:75px">+</div>
<div class="key gray" style="left:1076px;top:229px;width:75px;height:75px">Dole</div>
<div class="key " style="left:776px;top:304px;width:75px;height:75px">1</div>
<div class="key " style="left:851px;top:304px;width:75px;height:75px">2</div>
<div class="key " style="left:926px;top:304px;width:75px;height:75px">3</div>
<div class="key enter" style="left:1001px;top:304px;width:75px;height:150px">Enter</div>
<div class="key gray" style="left:1076px;top:304px;width:75px;height:75px">Vpravo</div>
<div class="key " style="left:776px;top:379px;width:150px;height:75px">0</div>
<div class="key " style="left:926px;top:379px;width:75px;height:75px">.</div>
<div class="key gray" style="left:1076px;top:379px;width:75px;height:75px">Vľavo</div>
<!--/KP-->
<div class="t" style="left:792px;top:456px;font-weight:bold;font-size:14px;letter-spacing:.55px;-webkit-text-stroke:.3px #000">Optimalizované pre rozlíšenie 1024 x 768</div>

<!-- buttons -->
<div class="btn" style="left:112px;top:448px;width:80px;height:45px">Zľava</div>
<div class="btn" style="left:194px;top:448px;width:79px;height:45px">Prirážka</div>
<div class="btn" style="left:275px;top:448px;width:80px;height:45px">Úprava</div>
<div class="btn" style="left:356px;top:448px;width:170px;height:45px">Stav karty na sklade</div>
<div class="btn" style="left:527px;top:447px;width:118px;height:45px;padding-bottom:1px">Detail karty</div>
<div class="btn" style="left:113px;top:498px;width:295px;height:40px;background:linear-gradient(#fff 0%,#fdfdfd 50%,#ececec 75%,#d8d8d8 100%)"></div>
<div class="a" style="left:171px;top:499px;width:1px;height:38px;background:#c8c8c8"></div><div class="a" style="left:230px;top:499px;width:1px;height:38px;background:#c8c8c8"></div><div class="a" style="left:289px;top:499px;width:1px;height:38px;background:#c8c8c8"></div><div class="a" style="left:348px;top:499px;width:1px;height:38px;background:#c8c8c8"></div>
<!--NAV-->
<svg class="a" style="left:113px;top:498px" width="295" height="40"><defs><radialGradient id="nbl" cx=".35" cy=".3" r=".75"><stop offset="0" stop-color="#5aa6f0"/><stop offset=".55" stop-color="#0b5fd0"/><stop offset="1" stop-color="#0a3e9a"/></radialGradient><radialGradient id="ngr" cx=".35" cy=".3" r=".75"><stop offset="0" stop-color="#7ade6a"/><stop offset=".55" stop-color="#16a516"/><stop offset="1" stop-color="#0a6a0a"/></radialGradient><radialGradient id="nor" cx=".35" cy=".3" r=".75"><stop offset="0" stop-color="#ffb050"/><stop offset=".55" stop-color="#ee7a0e"/><stop offset="1" stop-color="#b04a00"/></radialGradient></defs><circle cx="28.8" cy="19.8" r="14.8" fill="#2a2a3a" opacity=".55"/><circle cx="28" cy="18.8" r="14.6" fill="url(#nbl)"/><circle cx="28" cy="18.8" r="11.2" fill="none" stroke="#fff" stroke-width="2.4"/><rect x="21.5" y="13.3" width="2.8" height="11" fill="#fff"/><polygon points="24.5,18.8 33.5,12.8 33.5,24.8" fill="#fff"/><circle cx="87.8" cy="19.8" r="14.8" fill="#2a2a3a" opacity=".55"/><circle cx="87" cy="18.8" r="14.6" fill="url(#ngr)"/><circle cx="87" cy="18.8" r="11.2" fill="none" stroke="#fff" stroke-width="2.4"/><polygon points="81.5,18.8 90.5,11.8 90.5,25.8" fill="#fff"/><circle cx="146.8" cy="19.8" r="14.8" fill="#2a2a3a" opacity=".55"/><circle cx="146" cy="18.8" r="14.6" fill="url(#ngr)"/><circle cx="146" cy="18.8" r="11.2" fill="none" stroke="#fff" stroke-width="2.4"/><polygon points="151.5,18.8 142.5,11.8 142.5,25.8" fill="#fff"/><circle cx="205.8" cy="19.8" r="14.8" fill="#2a2a3a" opacity=".55"/><circle cx="205" cy="18.8" r="14.6" fill="url(#nbl)"/><circle cx="205" cy="18.8" r="11.2" fill="none" stroke="#fff" stroke-width="2.4"/><rect x="208.5" y="13.3" width="2.8" height="11" fill="#fff"/><polygon points="208.2,18.8 199.4,12.8 199.4,24.8" fill="#fff"/><circle cx="264.8" cy="19.8" r="14.8" fill="#2a2a3a" opacity=".55"/><circle cx="264" cy="18.8" r="14.6" fill="url(#nor)"/><circle cx="264" cy="18.8" r="11.2" fill="none" stroke="#fff" stroke-width="2.4"/><path d="M 268.6 17.6 A 4.8 4.8 0 1 1 263.5 14.200000000000001" fill="none" stroke="#fff" stroke-width="2.2"/><polygon points="263,10.8 268.5,14.600000000000001 263,17.6" fill="#fff"/></svg>
<!--/NAV-->
<div class="btn" style="left:412px;top:495px;width:145px;height:45px">Rozpracované paragóny</div>

<!-- grid 2 -->
<div class="a" style="left:110px;top:543px;width:1041px;height:168px;border-top:1px solid #a0a0a0;box-shadow:inset 0 1px 0 #fff;border-bottom:1px solid #fff"></div>
<div class="a" style="left:111px;top:545px;width:1040px;height:165px;background:#ffffe1;border-top:1px solid #a0a0a0;border-left:1px solid #a0a0a0;box-shadow:inset 1px 1px 0 #696969;border-bottom:1px solid #e3e3e3;border-right:1px solid #fff"></div>

<!--G2-->
<div class="a" style="left:113px;top:547px;width:12px;height:21px;background:#f0f0f0;border-right:1px solid #000;border-bottom:1px solid #000;border-top:1px solid #fff;border-left:1px solid #fff"></div>
<div class="g2h" style="left:125px;width:17px">R.</div>
<div class="g2h" style="left:142px;width:65px">Číslo</div>
<div class="g2h" style="left:207px;width:144px">Názov</div>
<div class="g2h" style="left:351px;width:64px">Cena/mj</div>
<div class="g2h" style="left:415px;width:76px">Množstvo</div>
<div class="g2h" style="left:491px;width:102px">Cena</div>
<div class="g2h" style="left:593px;width:78px">EAN Kód</div>
<div class="g2h" style="left:671px;width:25px">Jednotka</div>
<div class="g2h" style="left:696px;width:89px">Zľava</div>
<div class="g2h" style="left:785px;width:65px">Zľava %</div>
<div class="g2h" style="left:850px;width:65px">Sazba DPH</div>
<div class="g2h" style="left:915px;width:81px">Kód</div>
<div class="ind" style="top:568px;height:21px"></div>
<div class="a" style="left:116px;top:573px;width:0;height:0;border-top:6px solid transparent;border-bottom:6px solid transparent;border-left:6px solid #000"></div>
<div class="g2c" style="left:125px;width:17px"></div>
<div class="g2c" style="left:142px;width:65px"></div>
<div class="g2c" style="left:207px;width:144px"></div>
<div class="g2c" style="left:351px;width:64px"></div>
<div class="g2c" style="left:415px;width:76px"></div>
<div class="g2c" style="left:491px;width:102px"></div>
<div class="g2c" style="left:593px;width:78px"></div>
<div class="g2c" style="left:671px;width:25px"></div>
<div class="g2c" style="left:696px;width:89px"></div>
<div class="g2c" style="left:785px;width:65px"></div>
<div class="g2c" style="left:850px;width:65px"></div>
<div class="g2c" style="left:915px;width:81px"></div>
<div class="a" style="left:1133px;top:547px;width:17px;height:162px;background:linear-gradient(90deg,#e8e8e8,#f2f2f2 40%,#f2f2f2 60%,#e8e8e8)"></div>
<div class="a" style="left:1137px;top:553px;width:0;height:0;border-left:4px solid transparent;border-right:4px solid transparent;border-bottom:4px solid #404040"></div>
<div class="a" style="left:1137px;top:698px;width:0;height:0;border-left:4px solid transparent;border-right:4px solid transparent;border-top:4px solid #404040"></div>
<div class="a" style="left:1134px;top:565px;width:15px;height:15px;border:1px solid #9a9a9a;border-radius:2px;background:linear-gradient(90deg,#f4f4f4,#e8e8e8 50%,#d0d0d0 55%,#dcdcdc)"></div>
<!--/G2-->
<!-- tabs -->
<div class="a" style="left:113px;top:710px;width:59px;height:28px;border-top:2px solid #808080;border-left:2px solid #808080;border-right:1px solid #fff;border-bottom:1px solid #fff;background:#f4f4f4"></div>
<div class="t tab" style="left:121px">Číslo</div>
<div class="tsep" style="left:177px"></div>
<div class="t tab" style="left:189px">EAN Kód</div>
<div class="tsep" style="left:266px"></div>
<div class="t tab" style="left:278px">Názov</div>
<div class="tsep" style="left:336px"></div>
<div class="t tab" style="left:348px">Cena</div>
<div class="tsep" style="left:406px"></div>
<div class="t tab" style="left:418px">Kód</div>
<div class="tsep" style="left:476px"></div>

<div class="t" style="left:116px;top:749px;font-weight:bold;font-size:17px;letter-spacing:.3px;-webkit-text-stroke:.5px #000">Číslo</div>
<div class="a" style="left:163px;top:744px;width:144px;height:27px;background:#fff;border-top:2px solid #808080;border-left:2px solid #808080;border-right:1px solid #f0f0f0;border-bottom:1px solid #f0f0f0"></div>
<div class="t" style="left:1052px;top:721px;font-weight:bold;font-size:17px;-webkit-text-stroke:.5px #000">Množstvo</div>
<div class="a" style="left:1047px;top:748px;width:80px;height:27px;background:#fff;border-top:2px solid #808080;border-left:2px solid #808080;border-right:1px solid #f0f0f0;border-bottom:1px solid #f0f0f0"></div>

<!-- status -->
<div class="stat" style="left:8px;width:51px;color:#0000ff;padding-left:2px;letter-spacing:-0.5px">7.50.226</div>
<div class="stat" style="left:60px;width:49px;color:#ff0000;letter-spacing:-0.5px">OFF LINE</div>
<div class="stat" style="left:110px;width:1043px;letter-spacing:-0.2px">Prechádzanie paragónu&nbsp; Enter oprava množstva&nbsp; Delete zmazanie riadku&nbsp; Medzera návrat do hľadania</div>

</body></html>
